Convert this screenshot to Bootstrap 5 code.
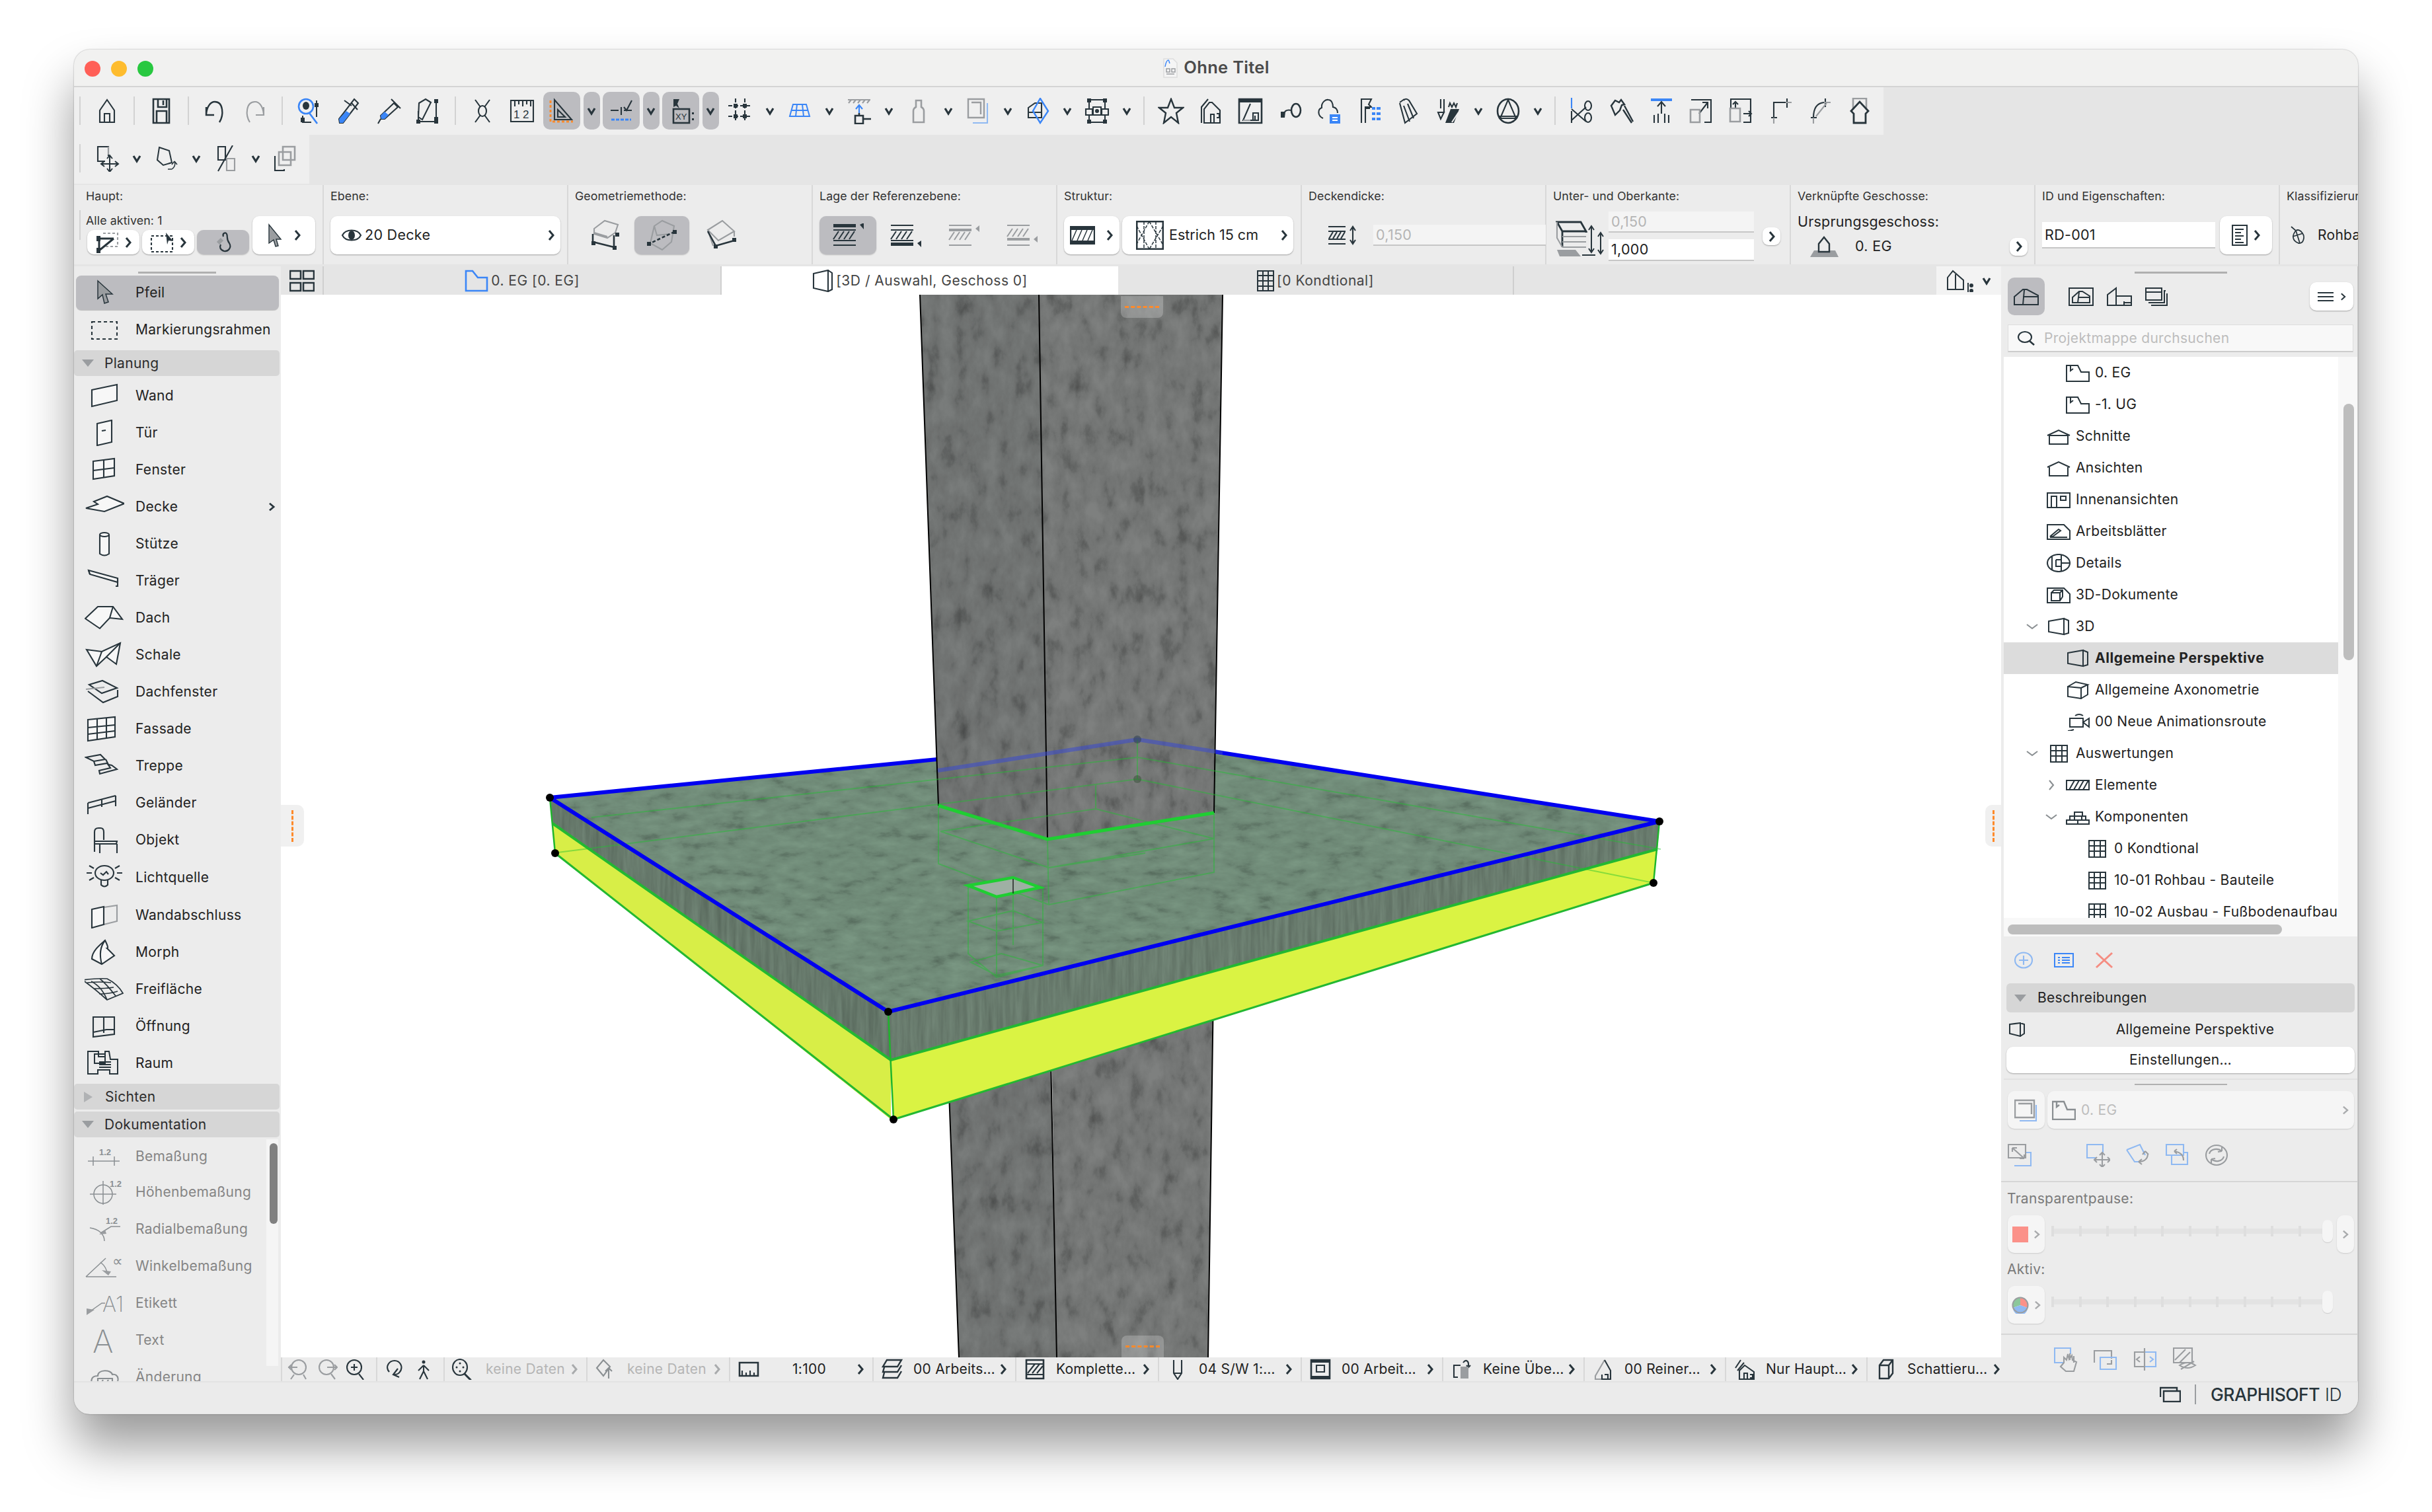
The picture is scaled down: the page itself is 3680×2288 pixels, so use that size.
<!DOCTYPE html>
<html lang="de">
<head>
<meta charset="UTF-8">
<title>Ohne Titel</title>
<link href="https://cdn.jsdelivr.net/npm/bootstrap@5.3.3/dist/css/bootstrap.min.css" rel="stylesheet">
<style>
html,body{background:#fff;margin:0}
body{padding:75px 0 0 112px;width:3680px;height:2288px;overflow:hidden;font-family:Inter,"Liberation Sans",sans-serif;color:#222;font-size:21px;letter-spacing:.3px;line-height:1.2}
.app-win{width:3456px;height:2065px;border-radius:24px;overflow:hidden;background:#e5e5e5;box-shadow:0 48px 75px rgba(0,0,0,.4),0 0 2px rgba(0,0,0,.4)}
.ic{fill:none;stroke:#28353c;stroke-width:2.1;flex:none;display:block}
.bl{stroke:#3b86f7}.gr{stroke:#9a9da0}.lb{stroke:#8fb9f2}.or{stroke:#ff8a2a}
.fd{fill:#28353c;stroke:none}.fb{fill:#3b86f7;stroke:none}.fg{fill:#9a9da0;stroke:none}.fw{fill:#f7f7f7}
.thin{stroke-width:1.5}
.off .ic{stroke:#8a8f92}.off .ic .fg{stroke:none}
.i40{width:40px;height:40px}
.pal-ic{width:60px;height:40px}
svg text{stroke:none;fill:currentColor;letter-spacing:0}
/* title */
.title-strip{height:57px;background:#f1f1f0;border-bottom:2px solid #d4d4d4;position:relative}
.light-dots{position:absolute;left:16px;top:17px;gap:16px}
.light-dots span{width:24px;height:24px}
.ttl{font-size:25.5px;font-weight:600;color:#4b4b4b}
/* toolbars */
.bar-1{height:72px;width:2738px;background:#efefef}
.bar-wrap{height:146px}
.bar-2{height:74px;width:356px;background:#efefef}
.t-sep{width:22px;height:72px;flex:none;position:relative}
.t-sep::after{content:"";position:absolute;left:10px;top:14px;height:43px;width:2px;background:#d2d2d2}
.t-sep.first{margin-left:-2px}
.t-ic{width:60px;height:72px;flex:none;display:flex;align-items:center;justify-content:center;position:relative}
.t-ch{width:30px;height:72px;flex:none;display:flex;align-items:center;justify-content:center}
.t-ic.on::before{content:"";position:absolute;left:2px;right:2px;top:7px;bottom:8px;background:#bcbcc0;border-radius:10px}
.t-ch.on{position:relative}
.t-ch.on::before{content:"";position:absolute;left:3px;right:2px;top:7px;bottom:8px;background:#bcbcc0;border-radius:10px}
.t-ic .ic,.t-ch .ic{position:relative}
.chv{width:14px;height:14px;stroke-width:3.2;fill:none;stroke:#28353c;display:block;flex:none}
.chr{width:12px;height:18px;stroke-width:3;fill:none;stroke:#28353c;display:block;flex:none}
.chr.dim{stroke:#a9abad}
/* info box */
.info-strip{height:120px;margin:2px 0 3px;background:#ececec;overflow:hidden}
.i-grp{width:370px;flex:none;height:120px;border-right:2px solid #d8d8d8;padding:8px 0 0 10px}
.i-grp.first{width:378px;padding-left:18px}
.i-grp.last{width:118px;border:0;overflow:hidden;white-space:nowrap}
.i-lab{font-size:17.8px;letter-spacing:.1px;height:18px;line-height:18px;color:#333;white-space:nowrap}
.i-body{margin-top:21px;height:58px}
.w-btn{background:#fff;border-radius:10px;box-shadow:0 1px 2px rgba(0,0,0,.32);height:58px;flex:none}
.g-btn{background:#bcbcc0;border-radius:10px;box-shadow:0 1px 2px rgba(0,0,0,.2);flex:none}
.m-btn{width:79px;height:37px}
.sm-btn{width:27px;height:27px;border-radius:9px;background:#fff;box-shadow:0 1px 2px rgba(0,0,0,.3);flex:none}
.f-in{background:#fff;border-bottom:2px solid #c6c6c6;padding-left:4px;font-size:21.5px;flex:none}
.f-in.dis{background:#f4f4f4;color:#b5b5b5}
/* palette */
.work-row{height:1687px}
.pal{width:313px;flex:none;background:#ececec;overflow:hidden;position:relative}
.grip{height:14px;position:relative}
.grip::after{content:"";position:absolute;top:8px;left:97px;width:118px;height:3px;background:#b0b0b0}
.pal-r{height:56px;padding-left:16px;position:relative}
.pal-r .pal-ic{margin-right:17px;flex:none}
.pal-r.sel{height:52px;margin:0 3px 2px;padding-left:13px;background:#bcbcc0;border-radius:8px;box-shadow:0 1px 1px rgba(0,0,0,.2)}
.pal-h{height:39px;background:#d6d6d6;border-radius:5px;margin:0 2px 0 0;padding-left:12px;color:#2c2c2c}
.tri-d{width:0;height:0;border:9px solid transparent;border-top:11px solid #9a9da0;border-bottom:0;margin-right:16px}
.tri-r{width:0;height:0;border:8px solid transparent;border-left:13px solid #b0b2b4;border-right:0;margin:0 19px 0 3px}
.off-list{height:366px;overflow:hidden;position:relative;color:#858585}
.pal-track{position:absolute;right:4px;top:0;bottom:23px;width:18px;background:#f5f5f5}
.pal-thumb{position:absolute;left:5px;top:6px;width:12px;height:122px;background:#808080;border-radius:6px}
/* centre */
.centre{width:2603px;flex:none}
.tab-strip{height:43px;background:#e5e5e5}
.tab-itm{width:600px;flex:none;font-size:21px;letter-spacing:.5px;color:#444;border-right:2px solid #cfcfcf;gap:4px}
.tab-itm.act{background:#fff;border-right:0}
.tab-grid{width:65px;flex:none;border-right:2px solid #cfcfcf}
.tab-rest{width:98px;background:#f3f3f3;flex:none}
.cv-wrap{height:1608px;background:#fff;position:relative;overflow:hidden}
.cv-wrap>svg{display:block}
.h-grab{position:absolute;background:#f0f0f0;display:flex;align-items:center;justify-content:center}
.h-l{left:0;top:772px;width:35px;height:63px;border-radius:0 10px 10px 0}
.h-r{right:0;top:772px;width:24px;height:63px;border-radius:10px 0 0 10px}
.h-t{left:1271px;top:2px;width:64px;height:33px;border-radius:0 0 8px 8px;background:rgba(255,255,255,.22)}
.h-b{left:1272px;bottom:0;width:64px;height:33px;border-radius:8px 8px 0 0;background:rgba(255,255,255,.22)}
.dash-v{width:0;height:48px;border-left:3px dashed #ff8a2a}
.dash-h{height:0;width:52px;border-top:3px dashed #ff8a2a}
.stat-strip{height:36px;background:#ececec;overflow:hidden;font-size:21px;letter-spacing:.25px;white-space:nowrap;border-left:2px solid #d8d8d8}
.st-g{height:36px;flex:none;border-right:2px solid #d8d8d8;padding:0 12px 0 12px}
.st-g .ic{width:32px;height:32px;margin-right:4px}
.st-g .st-t{flex:1 1 auto;padding-left:12px}
.w216{width:216px}.w214{width:214px}.w144{width:144px}.w102{width:102px}.w205{width:205px;border-right:0}
.dimt{color:#b5b5b5}
/* right */
.side{width:540px;flex:none;background:#ececec;overflow:hidden;border-right:1px solid #ccc}
.side-top{height:57px;padding-left:10px}
.side-grip{height:17px;position:relative}
.side-grip::after{content:"";position:absolute;top:8px;left:202px;width:140px;height:3px;background:#b0b0b0}
.s-sel{width:56px;height:57px;background:#bcbcc0;border-radius:10px;margin-right:36px}
.s-ic{margin-right:20px}
.s-menu{width:66px;height:43px;background:#fff;border-radius:10px;box-shadow:0 1px 2px rgba(0,0,0,.3);margin:0 6px 0 auto;gap:10px}
.s-find{height:42px;margin:14px 6px 7px 10px;background:#f8f8f8;border:1px solid #ddd;border-bottom:2px solid #ccc;color:#bdbdbd;padding-left:14px;gap:14px}
.t-list{height:849px;width:506px;background:#fff;overflow:hidden;margin-left:4px}
.t-r{height:48px;white-space:nowrap;overflow:hidden}
.t-r.sel{background:#dcdcdc;font-weight:700;letter-spacing:.6px}
.lv0{padding-left:31px}.lv1{padding-left:60px}.lv2{padding-left:89px}
.t-cw{width:24px;flex:none;margin-right:10px;display:flex;justify-content:center}
.t-i{width:36px;height:28px;flex:none;margin-right:8px}
.t-track{width:30px;height:877px;background:#f8f8f8;padding:71px 0 0 8px;flex:none}
.t-thumb{width:16px;height:388px;background:#bdbdbd;border-radius:8px}
.t-hbar{height:28px;width:506px;background:#f8f8f8;margin-left:4px;padding:10px 0 0 6px}
.t-hthumb{width:415px;height:15px;background:#bdbdbd;border-radius:8px}
.s-acts{height:71px;padding-left:20px;gap:32px}
.s-h{height:44px;background:#d6d6d6;border-radius:6px;margin:0 4px 0 8px;padding-left:12px}
.s-h .tri-d{border-width:11px 9px 0;margin-right:17px}
.s-pers{height:52px;padding-left:12px}
.s-pers span{flex:1;text-align:center;padding-left:12px}
.s-btn{height:40px;margin:0 4px 0 8px;background:#fff;border-radius:10px;box-shadow:0 1px 2px rgba(0,0,0,.3);text-align:center;line-height:40px}
.s-sep{height:27px;position:relative}
.s-sep::before{content:"";position:absolute;left:4px;right:0;top:8px;height:2px;background:#e2e2e2}
.s-sep::after{content:"";position:absolute;left:202px;width:140px;top:16px;height:2px;background:#b0b0b0}
.o-btn{height:57px;background:#f5f5f5;border-radius:10px;box-shadow:0 1px 2px rgba(0,0,0,.14);flex:none}
.o-line{height:2px;background:#d6d6d6}
.s-note{color:#7a7a7a;margin-left:9px;height:24px;line-height:24px}
.s-rowline{margin:13px 0 0 10px;height:57px}
.sld{width:424px;margin:7px 10px 0 8px;position:relative;height:34px;flex:none;padding:0 44px 0 2px}
.sld::before{content:"";position:absolute;left:2px;right:0;top:13px;height:8px;background:#e3e3e3}
.sld span{width:4px;height:16px;background:#dedede;position:relative}
.sld::after{content:"";position:absolute;right:-4px;top:0;width:16px;height:34px;background:#f5f5f5;border-radius:8px;box-shadow:0 1px 1px rgba(0,0,0,.14)}
.foot-strip{height:49px;background:#ebebeb;padding:0 25px 12px 0;border-top:2px solid #e3e3e3}
.gs-logo{font-size:26.5px;font-weight:500;letter-spacing:-.5px;color:#27343b;border-left:2px solid #9a9da0;padding-left:22px;margin-left:21px;height:30px;line-height:30px}
.gs-logo span{font-weight:300;margin-left:8px}
</style>
</head>
<body>
<div class="app-win d-flex flex-column">
  <div class="title-strip d-flex align-items-center justify-content-center flex-none">
    <div class="light-dots d-flex"><span class="rounded-circle" style="background:#ff5f57"></span><span class="rounded-circle" style="background:#febc2e"></span><span class="rounded-circle" style="background:#28c840"></span></div>
    <svg class="ic me-2 thin" width="24" height="30" viewBox="0 0 24 30"><path class="gr" d="M2 1h14l6 6v22H2Z" fill="#f5f5f5" style="stroke:#ddd"/><path class="bl thin" d="M4 13c1-6 3-10 5-10 1 0 1 3 2 5"/><path class="gr thin" d="M6 16h5v5H6ZM14 16h5v5h-5ZM6 24h12"/></svg>
    <span class="ttl">Ohne Titel</span>
  </div>

  <div class="bar-wrap">
    <div class="bar-1 d-flex">
      <div class="t-sep first"></div>
      <div class="t-ic"><svg class="ic i40" viewBox="0 0 40 40"><path d="M20 3 9 19v18h22V19ZM16 37V24h8v13"/></svg></div>
      <div class="t-sep"></div>
      <div class="t-ic"><svg class="ic i40" viewBox="0 0 40 40"><path d="M8 2h24v36H8ZM15 2v12h13V2M23 4v7M13 37V20h15v17" stroke-width="2.6"/></svg></div>
      <div class="t-sep"></div>
      <div class="t-ic"><svg class="ic i40" viewBox="0 0 40 40"><path d="M26 37c7-11 6-31-7-31C12 6 7 14 6 25M6 14v12h12" stroke-width="2.4"/></svg></div>
      <div class="t-ic"><svg class="ic i40" viewBox="0 0 40 40"><path class="gr" d="M12 37C5 26 6 6 20 6c7 0 12 8 13 19M33 14v12H21"/></svg></div>
      <div class="t-sep"></div>
      <div class="t-ic"><svg class="ic i40" viewBox="0 0 40 40"><circle class="bl" cx="15" cy="13" r="11" stroke-width="2.6"/><ellipse class="fd" cx="15" cy="12" rx="5" ry="6"/><path class="bl" d="M20 23l12 16" stroke-width="2.6"/><path d="M31 4v25M10 38V27M10 37h13" stroke-width="2"/><rect class="fd" x="28" y="8" width="6" height="6"/><rect class="fd" x="7" y="30" width="6" height="7"/></svg></div>
      <div class="t-ic"><svg class="ic i40" viewBox="0 0 40 40"><path d="M28 2 34 8 11 38 6 38 5 32ZM24 12l-11-8M33 18 24 8"/><path class="fb" d="M16 20 22 24 11 38 6 38 5 32Z"/></svg></div>
      <div class="t-ic"><svg class="ic i40" viewBox="0 0 40 40"><path d="M28 8 34 14 14 32 9 32 8 27ZM24 2l14 14M8 32l-4 7"/><path class="fb" d="M14 21 20 26 14 32 9 32 8 27Z"/></svg></div>
      <div class="t-ic"><svg class="ic i40" viewBox="0 0 40 40"><path d="M6 8l10-6 8 5-13 26-6-4ZM32 3v33M5 36h28M5 20v16"/><rect class="fd" x="29" y="2" width="6" height="6"/><rect class="fd" x="29" y="29" width="6" height="6"/><rect class="fd" x="2" y="33" width="6" height="6"/><rect class="fd" x="29" y="33" width="6" height="6"/></svg></div>
      <div class="t-sep"></div>
      <div class="t-ic"><svg class="ic i40" viewBox="0 0 40 40"><path d="M9 3l8 11M31 3l-8 11M9 37l8-11M31 37l-8-11"/><ellipse cx="20" cy="20" rx="6" ry="8"/></svg></div>
      <div class="t-ic"><svg class="ic i40" viewBox="0 0 40 40"><path d="M3 4h34v32H3ZM9 4v9M15 4v6M21 4v9M27 4v6M33 4v9"/><text x="7" y="31" font-size="17" font-family="Liberation Sans" style="fill:#28353c">1</text><text x="21" y="31" font-size="17" font-family="Liberation Sans" style="fill:#28353c">2</text></svg></div>
      <div class="t-ic on"><svg class="ic i40" viewBox="0 0 40 40"><path d="M9 3v30h26ZM14 18v11h11Z"/><path class="or" d="M3 4v32h34" stroke-dasharray="4 3" stroke-width="3"/></svg></div>
      <div class="t-ch on"><svg class="chv" style="position:relative" viewBox="0 0 14 14"><path d="M2 3l5 8 5-8"/></svg></div>
      <div class="t-ic on"><svg class="ic i40" viewBox="0 0 40 40"><path d="M4 19h12M24 19h12M20 14v12M24 14l4 5 8-15"/><path class="bl" d="M5 33h30" stroke-width="3" stroke-dasharray="5 2"/></svg></div>
      <div class="t-ch on"><svg class="chv" style="position:relative" viewBox="0 0 14 14"><path d="M2 3l5 8 5-8"/></svg></div>
      <div class="t-ic on"><svg class="ic i40" viewBox="0 0 40 40"><path class="fd" d="M9 2h9l-3 7 3 7-5-4-4 2Z"/><rect x="9" y="17" width="24" height="21" stroke-width="2.6"/><text x="12" y="33" font-size="13" font-family="Liberation Sans" style="fill:#28353c">XY</text><rect class="fd" x="37" y="22" width="3" height="3"/><rect class="fd" x="37" y="31" width="3" height="3"/></svg></div>
      <div class="t-ch on"><svg class="chv" style="position:relative" viewBox="0 0 14 14"><path d="M2 3l5 8 5-8"/></svg></div>
      <div class="t-ic"><svg class="ic i40" viewBox="0 0 40 40"><path d="M13 1v36M27 1v36M2 12h36M2 28h36" stroke-dasharray="6 3"/><rect class="fd" x="10" y="9" width="6" height="6"/><rect class="fd" x="24" y="9" width="6" height="6"/><rect class="fd" x="10" y="25" width="6" height="6"/><rect class="fd" x="24" y="25" width="6" height="6"/></svg></div>
      <div class="t-ch"><svg class="chv" viewBox="0 0 14 14"><path d="M2 3l5 8 5-8"/></svg></div>
      <div class="t-ic"><svg class="ic i40" viewBox="0 0 40 40"><path class="bl" d="M10 10h20l5 18H5ZM16 10l-2 18M24 10l2 18M7 19h26" stroke-width="2"/></svg></div>
      <div class="t-ch"><svg class="chv" viewBox="0 0 14 14"><path d="M2 3l5 8 5-8"/></svg></div>
      <div class="t-ic"><svg class="ic i40" viewBox="0 0 40 40"><path class="gr" d="M3 3h34M8 3 4 8M15 3l-4 5M22 3l-4 5M29 3l-4 5M36 3l-4 5"/><path class="bl" d="M20 13v10M15 17l5-6 5 6"/><path d="M20 27v-4M14 27h12v12H14ZM26 32h12" stroke-width="2.6"/></svg></div>
      <div class="t-ch"><svg class="chv" viewBox="0 0 14 14"><path d="M2 3l5 8 5-8"/></svg></div>
      <div class="t-ic"><svg class="ic i40" viewBox="0 0 40 40"><path class="gr" d="M16 4h8v10q4 2 4 6v17H12V20q0-4 4-6Z" stroke-width="2.6"/></svg></div>
      <div class="t-ch"><svg class="chv" viewBox="0 0 14 14"><path d="M2 3l5 8 5-8"/></svg></div>
      <div class="t-ic"><svg class="ic i40" viewBox="0 0 40 40"><path class="lb" d="M34 8v30H12"/><path class="gr" d="M5 2h24v28H5ZM10 7h14v18" stroke-width="2.4"/></svg></div>
      <div class="t-ch"><svg class="chv" viewBox="0 0 14 14"><path d="M2 3l5 8 5-8"/></svg></div>
      <div class="t-ic"><svg class="ic i40" viewBox="0 0 40 40"><path d="M6 15 16 8h10v22H6ZM6 22h20"/><path class="bl" d="M24 1 36 20 24 38 13 20Z" stroke-width="2.4"/></svg></div>
      <div class="t-ch"><svg class="chv" viewBox="0 0 14 14"><path d="M2 3l5 8 5-8"/></svg></div>
      <div class="t-ic"><svg class="ic i40" viewBox="0 0 40 40"><path d="M8 3h24M32 3v14M8 3v14M3 17h10v9H3ZM27 17h10v9H27ZM8 26v11M32 26v11M8 37h24M14 14h12v12H14Z"/><rect class="fd" x="5" y="1" width="6" height="6"/><rect class="fd" x="29" y="1" width="6" height="6"/><rect class="fd" x="5" y="33" width="6" height="6"/><rect class="fd" x="29" y="33" width="6" height="6"/><circle class="fd" cx="20" cy="20" r="3"/></svg></div>
      <div class="t-ch"><svg class="chv" viewBox="0 0 14 14"><path d="M2 3l5 8 5-8"/></svg></div>
      <div class="t-sep"></div>
      <div class="t-ic"><svg class="ic i40" viewBox="0 0 40 40"><path d="M20 2l5 13h13l-10 8 3 15-11-9-11 9 3-15L2 15h13Z" stroke-width="2.4"/></svg></div>
      <div class="t-ic"><svg class="ic i40" viewBox="0 0 40 40"><path d="M6 38V14L16 2M10 38V17L18 7h4l12 12v19H10ZM20 38V25h5v13M29 24h4v6h-4"/></svg></div>
      <div class="t-ic"><svg class="ic i40" viewBox="0 0 40 40"><path d="M3 2h34v36H3Z" stroke-width="2.6"/><path class="fd" d="M3 2h34v5H3Z"/><path d="M20 9 9 34h20"/><path class="gr" d="M9 34h11"/><path d="M24 23h8v11h-8ZM27 27v7"/></svg></div>
      <div class="t-ic"><svg class="ic i40" viewBox="0 0 40 40"><ellipse cx="29" cy="19" rx="7" ry="10" stroke-width="2.6"/><path d="M22 19c-8-2-11 2-12 7"/><path class="fd" d="M6 21h7l-1 9H6Z"/></svg></div>
      <div class="t-ic"><svg class="ic i40" viewBox="0 0 40 40"><path d="M10 31C1 27 2 17 8 15 7 7 14 2 18 3c5 0 7 6 7 11 6 1 7 6 7 9"/><path class="fb" d="M20 25h16v14H20Z"/><path d="M24 30h8M24 34h8" style="stroke:#fff"/></svg></div>
      <div class="t-ic"><svg class="ic i40" viewBox="0 0 40 40"><path d="M8 38V2h15l-4 8 4 4h-9v24M14 16h7"/><path class="fb" d="M24 14h5v4h-5ZM31 14h6v4h-6ZM24 22h5v4h-5ZM31 22h6v4h-6ZM24 30h5v4h-5ZM31 30h6v4h-6Z"/></svg></div>
      <div class="t-ic"><svg class="ic i40" viewBox="0 0 40 40"><path d="M6 7 13 2M6 8l8 30L32 24 20 4c-3-3-6-3-8 0M12 12l9 24M18 9l9 22"/></svg></div>
      <div class="t-ic"><svg class="ic i40" viewBox="0 0 40 40"><path d="M8 2v14M8 22h-4l4 10 5-10ZM13 2v20M20 14l2-6 3 6 3-6 3 6 2-6"/><path class="fd" d="M15 38l8-21h13l-8 21Z"/><path d="M25 37l10-15" style="stroke:#efefef"/></svg></div>
      <div class="t-ch"><svg class="chv" viewBox="0 0 14 14"><path d="M2 3l5 8 5-8"/></svg></div>
      <div class="t-ic"><svg class="ic i40" viewBox="0 0 40 40"><ellipse cx="20" cy="20" rx="16" ry="18" stroke-width="2.6"/><path d="M20 3 8 31h24ZM6 28h28"/></svg></div>
      <div class="t-ch"><svg class="chv" viewBox="0 0 14 14"><path d="M2 3l5 8 5-8"/></svg></div>
      <div class="t-sep"></div>
      <div class="t-ic"><svg class="ic i40" viewBox="0 0 40 40"><path class="bl" d="M4 0v16"/><path d="M4 20v18M4 17l22 19M4 34 26 14"/><ellipse cx="29" cy="12" rx="5" ry="7"/><ellipse cx="29" cy="30" rx="5" ry="7"/></svg></div>
      <div class="t-ic"><svg class="ic i40" viewBox="0 0 40 40"><path d="M10 4 4 12l6 14 7-7 3-8 4-1-5-7-3 4ZM22 18l13 20M24 12l13 24" stroke-width="2.4"/></svg></div>
      <div class="t-ic"><svg class="ic i40" viewBox="0 0 40 40"><path class="bl" d="M4 3h32" stroke-width="4"/><path d="M20 6v18M14 13l6-7 6 7M9 26v12M15 24v14M25 24v14M31 26v12"/></svg></div>
      <div class="t-ic"><svg class="ic i40" viewBox="0 0 40 40"><path d="M5 3h30v34h-10M35 3M17 24 30 7M22 7h8v9"/><path class="gr" d="M4 18h14v19H4Z" stroke-width="2.6"/></svg></div>
      <div class="t-ic"><svg class="ic i40" viewBox="0 0 40 40"><path d="M5 16V2h30v35H24M12 16V8M8 10l4-4 4 4M24 24h12M32 20l4 4-4 4"/><path class="gr" d="M4 16h15v20H4Z" stroke-width="2.6"/></svg></div>
      <div class="t-ic"><svg class="ic i40" viewBox="0 0 40 40"><path d="M10 30V7h18M30 1v14M6 30h9"/><path class="gr" d="M10 30v9M28 7h9"/></svg></div>
      <div class="t-ic"><svg class="ic i40" viewBox="0 0 40 40"><path d="M10 30C10 17 15 8 26 7M28 1v13M6 30h9"/><path class="gr" d="M10 30v9M26 7h10M14 28 30 8"/></svg></div>
      <div class="t-ic"><svg class="ic i40" viewBox="0 0 40 40"><path class="gr" d="M10 18V1h20v17" stroke-width="2.6"/><path d="M7 20 20 6l13 14-3 3-1 1v14H11V24l-4-4Z" stroke-width="2.8"/></svg></div>
    </div>
    <div class="bar-2 d-flex">
      <div class="t-sep first"></div>
      <div class="t-ic"><svg class="ic i40" viewBox="0 0 40 40"><path d="M17 24H6V2h16v14M6 2"/><path class="gr" d="M22 14v-12"/><path d="M24 16v23M12 28h24M20 20l4-5 4 5M20 35l4 5 4-5M16 24l-5 4 5 4M32 24l5 4-5 4" stroke-width="2"/></svg></div>
      <div class="t-ch"><svg class="chv" viewBox="0 0 14 14"><path d="M2 3l5 8 5-8"/></svg></div>
      <div class="t-ic"><svg class="ic i40" viewBox="0 0 40 40"><path d="M9 3l15 5 4 18-13 4L6 22Z" stroke-width="2"/><path class="thin" d="M32 24c2 6-1 10-4 12M28 36h-6M32 24l-4 5M32 24l4 5"/></svg></div>
      <div class="t-ch"><svg class="chv" viewBox="0 0 14 14"><path d="M2 3l5 8 5-8"/></svg></div>
      <div class="t-ic"><svg class="ic i40" viewBox="0 0 40 40"><path d="M8 2h11v20H8ZM8 39 30 0"/><path class="gr" d="M21 20h12v18H21Z"/></svg></div>
      <div class="t-ch"><svg class="chv" viewBox="0 0 14 14"><path d="M2 3l5 8 5-8"/></svg></div>
      <div class="t-ic"><svg class="ic i40" viewBox="0 0 40 40"><path d="M4 16v22h14v-2"/><path class="gr" d="M16 2h18v20H16ZM10 10h18v20H10Z" stroke-width="2.6"/></svg></div>
    </div>
  </div>

  <div class="info-strip d-flex">
    <div class="i-grp first position-relative">
      <div class="i-lab">Haupt:</div>
      <div class="d-flex" style="margin-top:18px;height:62px">
        <div class="d-flex flex-column">
          <div class="i-lab" style="height:19px;line-height:19px">Alle aktiven: 1</div>
          <div class="d-flex gap-1 ms-0" style="margin-top:5px">
            <div class="w-btn m-btn d-flex align-items-center justify-content-center gap-2" style="margin-left:2px"><svg class="ic" width="36" height="32" viewBox="0 0 36 32"><path class="gr" d="M12 2h22v20H12" stroke-dasharray="4 3"/><path d="M2 10h26M6 10v20M6 28 28 10" stroke-width="3"/><rect class="fd" x="2" y="6" width="6" height="8"/><rect class="fd" x="2" y="24" width="6" height="8"/></svg><svg class="chr" viewBox="0 0 12 18"><path d="M3 2l6 7-6 7"/></svg></div>
            <div class="w-btn m-btn d-flex align-items-center justify-content-center gap-2"><svg class="ic" width="36" height="32" viewBox="0 0 36 32"><path d="M2 6h32v24H2Z" stroke-dasharray="4 3"/><path class="fd" d="M24 1l11 13-7-1-2 6Z"/></svg><svg class="chr" viewBox="0 0 12 18"><path d="M3 2l6 7-6 7"/></svg></div>
            <div class="g-btn m-btn d-flex align-items-center justify-content-center"><svg class="ic" width="34" height="34" viewBox="0 0 34 34"><path class="gr" d="M9 18l6-6" stroke-width="6"/><path d="M17 8c-2-5 3-7 5-4 2 4-1 8 4 14 4 7-2 13-8 12-6-2-7-6-5-10" stroke-width="2.2"/></svg></div>
          </div>
        </div>
        <div class="w-btn d-flex align-items-center justify-content-center gap-3" style="width:95px;margin-left:5px;margin-top:3px"><svg class="ic" width="24" height="36" viewBox="0 0 24 36"><path class="fg" d="M3 2 21 24h-7l3 10-4 1-3-10-7 5Z"/><path d="M3 2 21 24h-7l3 10-4 1-3-10-7 5Z" stroke-width="1.4"/></svg><svg class="chr" viewBox="0 0 12 18"><path d="M3 2l6 7-6 7"/></svg></div>
      </div>
      <span class="position-absolute" style="left:8px;top:38px;width:2px;height:45px;background:#d2d2d2"></span>
    </div>
    <div class="i-grp">
      <div class="i-lab">Ebene:</div>
      <div class="i-body"><div class="w-btn d-flex align-items-center ps-3 pe-2" style="width:348px"><svg class="ic me-1" width="32" height="28" viewBox="0 0 32 28"><path d="M2 14C7 4 25 4 30 14 25 24 7 24 2 14Z"/><ellipse class="fd" cx="16" cy="14" rx="5" ry="7"/></svg><span class="flex-grow-1" style="font-size:21.5px">20 Decke</span><svg class="chr" viewBox="0 0 12 18"><path d="M3 2l6 7-6 7"/></svg></div></div>
    </div>
    <div class="i-grp">
      <div class="i-lab">Geometriemethode:</div>
      <div class="i-body d-flex align-items-center">
        <div style="width:90px" class="d-flex justify-content-center"><svg class="ic" width="52" height="48" viewBox="0 0 52 48"><path class="gr" d="M10 14 26 2 46 8l-4 12-12 8-20-6ZM10 20l20 6"/><path d="M8 34l32 8M8 22v16M40 24v18" stroke-width="2.6"/><rect class="fd" x="6" y="33" width="6" height="6"/><rect class="fd" x="38" y="40" width="6" height="6"/><rect class="fd" x="42" y="20" width="6" height="6"/></svg></div>
        <div class="g-btn d-flex align-items-center justify-content-center" style="width:83px;height:58px"><svg class="ic" width="52" height="48" viewBox="0 0 52 48"><path class="gr" d="M14 10 26 2 44 10 40 34 26 46 8 36ZM14 10l4 14 20-2"/><path d="M4 38 46 18" stroke-dasharray="5 3" stroke-width="2.6"/><rect class="fd" x="3" y="34" width="6" height="6"/><rect class="fd" x="42" y="16" width="6" height="6"/></svg></div>
        <div style="width:92px" class="d-flex justify-content-center"><svg class="ic" width="52" height="48" viewBox="0 0 52 48"><path class="gr" d="M8 16 30 2 48 18 24 32ZM8 16l8 24M48 18v8"/><path d="M8 18l12 22 28-8" stroke-width="2.6"/><rect class="fd" x="17" y="38" width="6" height="6"/><rect class="fd" x="45" y="28" width="6" height="6"/></svg></div>
      </div>
    </div>
    <div class="i-grp">
      <div class="i-lab">Lage der Referenzebene:</div>
      <div class="i-body d-flex align-items-center">
        <div class="g-btn d-flex align-items-center justify-content-center" style="width:86px;height:58px"><svg class="ic" width="52" height="36" viewBox="0 0 52 36"><path class="fd" d="M4 1h34v5H4Z"/><path d="M4 10h34M4 26h34M4 33h34M4 24l8-12M12 24l8-12M20 24l8-12M28 24l8-12" stroke-width="2"/><path class="fd" d="M44 2l6-3v10Z"/></svg></div>
        <div style="width:88px" class="d-flex justify-content-center"><svg class="ic" width="52" height="36" viewBox="0 0 52 36"><path d="M4 3h34M4 26h34M4 10h34M4 24l8-12M12 24l8-12M20 24l8-12M28 24l8-12" stroke-width="2"/><path class="fd" d="M4 29h34v5H4Z"/><path class="fd" d="M44 30l6-4v10Z"/></svg></div>
        <div style="width:88px" class="d-flex justify-content-center"><svg class="ic" width="52" height="36" viewBox="0 0 52 36"><path class="gr" d="M4 3h34M4 33h34M4 25l8-12M12 25l8-12M20 25l8-12M28 25l8-12" stroke-width="2"/><path class="fg" d="M4 8h34v4H4Z"/><path class="fg" d="M44 8l6-5v10Z"/></svg></div>
        <div style="width:88px" class="d-flex justify-content-center"><svg class="ic" width="52" height="36" viewBox="0 0 52 36"><path class="gr" d="M4 3h34M4 33h34M4 20l8-12M12 20l8-12M20 20l8-12M28 20l8-12" stroke-width="2"/><path class="fg" d="M4 22h34v4H4Z"/><path class="fg" d="M44 24l6-5v10Z"/></svg></div>
      </div>
    </div>
    <div class="i-grp">
      <div class="i-lab">Struktur:</div>
      <div class="i-body d-flex gap-1">
        <div class="w-btn d-flex align-items-center justify-content-center gap-3" style="width:84px"><svg class="ic" width="38" height="28" viewBox="0 0 38 28"><path d="M1 1h36v26H1Z" stroke-width="2.4"/><path class="fd" d="M1 1h36v5H1ZM1 22h36v5H1Z"/><path class="thin" d="M3 22 10 6M11 22 18 6M19 22 26 6M27 22 34 6"/></svg><svg class="chr" viewBox="0 0 12 18"><path d="M3 2l6 7-6 7"/></svg></div>
        <div class="w-btn d-flex align-items-center" style="width:259px;padding-left:21px"><svg class="ic me-2" width="42" height="44" viewBox="0 0 42 44"><rect x="1" y="1" width="40" height="42" stroke-width="3"/><path class="thin" d="M1 8 20 43M20 1l20 34M41 8 20 43M20 1 1 35M12 1v42M30 1v42" stroke-dasharray="5 2"/></svg><span class="flex-grow-1" style="font-size:21.5px;letter-spacing:0;white-space:nowrap">Estrich 15 cm</span><svg class="chr me-2" viewBox="0 0 12 18"><path d="M3 2l6 7-6 7"/></svg></div>
      </div>
    </div>
    <div class="i-grp">
      <div class="i-lab">Deckendicke:</div>
      <div class="i-body d-flex align-items-center" style="padding-left:29px">
        <svg class="ic" width="46" height="30" viewBox="0 0 46 30"><path d="M1 2h26M1 28h26M1 9h26M1 21h26M2 20 8 10M8 20l6-10M14 20l6-10M20 20l6-10"/><path d="M38 3v24M34 8l4-6 4 6M34 22l4 6 4-6"/></svg>
        <div class="f-in dis" style="width:261px;height:32px;line-height:30px;margin-left:23px">0,150</div>
      </div>
    </div>
    <div class="i-grp">
      <div class="i-lab">Unter- und Oberkante:</div>
      <div class="d-flex align-items-center" style="margin-top:14px;height:75px;padding-left:4px">
        <svg class="ic" width="84" height="60" viewBox="0 0 84 60"><path d="M2 8h36l8 14H10ZM10 22v24M46 22v2" stroke-width="2.8"/><path class="gr" d="M2 8v24l8 14M10 30h36M10 38h36M10 46h36"/><path class="fg" d="M2 50h28l8 10H6Z"/><path d="M54 14v40M50 20l4-6 4 6M50 48l4 6 4-6M68 24v32M64 30l4-6 4 6M64 50l4 6 4-6M40 58h20" stroke-width="2"/></svg>
        <div class="d-flex flex-column" style="gap:10px;margin-left:-4px"><div class="f-in dis" style="width:220px;height:32px;line-height:30px">0,150</div><div class="f-in" style="width:220px;height:33px;line-height:31px">1,000</div></div>
        <div class="sm-btn d-flex align-items-center justify-content-center" style="margin-left:13px"><svg class="chr" viewBox="0 0 12 18"><path d="M3 2l6 7-6 7"/></svg></div>
      </div>
    </div>
    <div class="i-grp">
      <div class="i-lab">Verknüpfte Geschosse:</div>
      <div style="margin-top:18px;font-size:21.5px;line-height:22px;letter-spacing:.2px">Ursprungsgeschoss:</div>
      <div class="d-flex align-items-center" style="margin-top:12px;height:30px">
        <svg class="ic" style="margin-left:17px" width="46" height="32" viewBox="0 0 46 32"><path class="fg" d="M8 22h32l5 10H2Z"/><path d="M23 2 15 12v12h16V12Z" stroke-width="2.4" fill="#ececec"/></svg>
        <span class="flex-grow-1" style="margin-left:24px;font-size:21.5px">0. EG</span>
        <div class="sm-btn d-flex align-items-center justify-content-center" style="margin-right:10px"><svg class="chr" viewBox="0 0 12 18"><path d="M3 2l6 7-6 7"/></svg></div>
      </div>
    </div>
    <div class="i-grp">
      <div class="i-lab">ID und Eigenschaften:</div>
      <div class="i-body d-flex align-items-center">
        <div class="f-in" style="width:262px;height:40px;line-height:38px">RD-001</div>
        <div class="w-btn d-flex align-items-center justify-content-center gap-2" style="width:79px;margin-left:7px"><svg class="ic" width="24" height="32" viewBox="0 0 24 32"><path d="M1 1h22v30H1Z"/><path d="M5 7h13M5 12h9M5 17h13M5 22h9M5 27h13" stroke-width="2"/></svg><svg class="chr" viewBox="0 0 12 18"><path d="M3 2l6 7-6 7"/></svg></div>
      </div>
    </div>
    <div class="i-grp last">
      <div class="i-lab">Klassifizierung:</div>
      <div class="i-body d-flex align-items-center ps-1"><svg class="ic" style="margin-right:17px" width="26" height="28" viewBox="0 0 26 28"><path d="M3 1l7 6C4 14 4 22 14 26c8 1 10-10 6-15C17 6 13 5 10 7M10 7l6 19M5 16l16-5" stroke-width="1.8"/></svg><span>Rohbau</span></div>
    </div>
  </div>

  <div class="work-row d-flex">
    <div class="pal">
      <div class="grip"></div>
      <div class="pal-r sel d-flex align-items-center"><div class="pal-ic d-flex justify-content-center"><svg class="ic" width="30" height="40" viewBox="0 0 30 40"><path class="fg" d="M5 2 27 22H17l4 12-6 2-3-13-7 6Z"/><path d="M5 2 27 22H17l4 12-6 2-3-13-7 6Z" stroke-width="1.5"/></svg></div><span>Pfeil</span></div>
      <div class="pal-r d-flex align-items-center"><svg class="ic pal-ic" viewBox="0 0 60 40"><path d="M11 8h38v26H11Z" stroke-dasharray="5 4"/></svg><span>Markierungsrahmen</span></div>
      <div class="pal-h d-flex align-items-center" style="margin-top:3px;margin-bottom:2px"><span class="tri-d"></span>Planung</div>
      <div class="pal-r d-flex align-items-center"><svg class="ic pal-ic" viewBox="0 0 60 40"><path class="fw" d="M11 11 49 3v24L11 36Z"/></svg><span>Wand</span></div>
      <div class="pal-r d-flex align-items-center"><svg class="ic pal-ic" viewBox="0 0 60 40"><path class="fw" d="M19 6 41 1v33L19 39Z"/><path d="M26 17l6-1"/></svg><span>Tür</span></div>
      <div class="pal-r d-flex align-items-center"><svg class="ic pal-ic" viewBox="0 0 60 40"><path class="fw" d="M13 7 45 3v26L13 34Z"/><path d="M29 5v27M13 21l32-4"/></svg><span>Fenster</span></div>
      <div class="pal-r d-flex align-items-center"><svg class="ic pal-ic" viewBox="0 0 60 40"><path class="fw" d="M2 22 20 16l-6-4 20-8 26 11-30 12Z"/></svg><span>Decke</span><svg class="chr position-absolute" style="right:8px;top:20px;width:11px;height:16px" viewBox="0 0 12 18"><path d="M2 3l7 6-7 6"/></svg></div>
      <div class="pal-r d-flex align-items-center"><svg class="ic pal-ic" viewBox="0 0 60 40"><path class="fw" d="M23 6V35q7 5 14 0V6"/><ellipse class="fw" cx="30" cy="6" rx="7" ry="3"/></svg><span>Stütze</span></div>
      <div class="pal-r d-flex align-items-center"><svg class="ic pal-ic" viewBox="0 0 60 40"><path class="fw" d="M6 4 50 16v6L8 10Z"/><path d="M8 10 6 4M50 16v12h-3"/></svg><span>Träger</span></div>
      <div class="pal-r d-flex align-items-center"><svg class="ic pal-ic" viewBox="0 0 60 40"><path class="fw" d="M1 21 20 3h23l14 19-19-2-15 16Z"/><path d="M43 3 38 20"/></svg><span>Dach</span></div>
      <div class="pal-r d-flex align-items-center"><svg class="ic pal-ic" viewBox="0 0 60 40"><path class="fw" d="M3 12 18 37l15-14 15 11L54 2 26 15Z"/><path d="M26 15 18 37M54 2 33 23"/></svg><span>Schale</span></div>
      <div class="pal-r d-flex align-items-center"><svg class="ic pal-ic" viewBox="0 0 60 40"><path d="M7 9 27 3l22 11-23 8ZM5 19l23 17 22-9V17"/><path class="gr" d="M2 16 30 13"/></svg><span>Dachfenster</span></div>
      <div class="pal-r d-flex align-items-center"><svg class="ic pal-ic" viewBox="0 0 60 40"><path class="fw" d="M5 6 46 2v30L5 38Z"/><path d="M19 5v31M33 3v31M5 18l41-4M5 28l41-5"/></svg><span>Fassade</span></div>
      <div class="pal-r d-flex align-items-center"><svg class="ic pal-ic" viewBox="0 0 60 40"><path d="M2 7 24 3l7 7-17 3ZM14 13l2 6 18-3 5 7-17 4 1 5 26-7-8-6-5-1-4-8"/></svg><span>Treppe</span></div>
      <div class="pal-r d-flex align-items-center"><svg class="ic pal-ic" viewBox="0 0 60 40"><path d="M5 20 47 9M5 28 47 17M5 37V20M26 26V14M47 25V9"/></svg><span>Geländer</span></div>
      <div class="pal-r d-flex align-items-center"><svg class="ic pal-ic" viewBox="0 0 60 40"><path d="M15 38V8q0-6 6-6h3q5 0 5 6v12M15 22h34l-1 4H15M23 26v14M49 26v14"/></svg><span>Objekt</span></div>
      <div class="pal-r d-flex align-items-center" style="height:58px"><svg class="ic pal-ic" viewBox="0 0 60 40"><ellipse cx="30" cy="13" rx="14" ry="11"/><path d="M25 24v7q5 5 10 0v-7M24 13l4 3 5-5 3 4M3 13h8M49 13h8M7 2l7 4M53 2l-7 4M7 24l7-4M53 24l-7-4"/></svg><span>Lichtquelle</span></div>
      <div class="pal-r d-flex align-items-center" style="height:56px"><svg class="ic pal-ic" viewBox="0 0 60 40"><path class="gr" d="M29 8l20-3v24l-20 5"/><path class="fw" d="M11 11l18-4v27l-18 5Z"/></svg><span>Wandabschluss</span></div>
      <div class="pal-r d-flex align-items-center"><svg class="ic pal-ic" viewBox="0 0 60 40"><path class="fw" d="M11 30C11 18 24 8 31 2q6 12 3 12l11 11-19 13Z"/><path d="M31 2Q20 16 26 38"/></svg><span>Morph</span></div>
      <div class="pal-r d-flex align-items-center"><svg class="ic pal-ic" viewBox="0 0 60 40"><path d="M-3 6Q20 3 34 4q16 8 24 22L34 36Q14 18-3 6ZM10 8q16 8 24 28M23 4q10 8 24 26M4 10q18-2 36 0M14 19q18 0 30-2M22 27q16 0 28-4" stroke-width="1.7"/></svg><span>Freifläche</span></div>
      <div class="pal-r d-flex align-items-center"><svg class="ic pal-ic" viewBox="0 0 60 40"><path d="M13 6h32v26l-32 4ZM29 6v24M13 29l20-4h12"/></svg><span>Öffnung</span></div>
      <div class="pal-r d-flex align-items-center"><svg class="ic pal-ic" viewBox="0 0 60 40"><path d="M5 2h16v8h10V2h6l2 12h11v22H38v-6H20v6H5ZM15 6h16v14H15ZM22 18h18M22 22h18M22 26h18" stroke-width="2"/></svg><span>Raum</span></div>
      <div class="pal-h d-flex align-items-center" style="margin-top:3px"><span class="tri-r"></span>Sichten</div>
      <div class="pal-h d-flex align-items-center" style="margin-top:3px;height:39px"><span class="tri-d"></span>Dokumentation</div>
      <div class="off-list off" style="margin-top:3px">
        <div class="pal-r d-flex align-items-center" style="height:52px"><svg class="ic pal-ic" viewBox="0 0 60 40" style="color:#8a8f92"><path class="thin" d="M5 27h48M13 20v14M45 20v14"/><text x="22" y="18" font-size="13" font-weight="700" font-family="Liberation Sans">1.2</text></svg><span>Bemaßung</span></div>
        <div class="pal-r d-flex align-items-center"><svg class="ic pal-ic" viewBox="0 0 60 40" style="color:#8a8f92"><circle cx="28" cy="23" r="14" class="thin"/><path class="thin" d="M8 23h40M28 3v36"/><text x="38" y="12" font-size="13" font-weight="700" font-family="Liberation Sans">1.2</text></svg><span>Höhenbemaßung</span></div>
        <div class="pal-r d-flex align-items-center"><svg class="ic pal-ic" viewBox="0 0 60 40" style="color:#8a8f92"><path class="thin" d="M8 18C22 20 30 28 30 38M24 26 40 16h14"/><path class="fg" d="M22 28l9-7 2 6Z"/><text x="32" y="12" font-size="13" font-weight="700" font-family="Liberation Sans">1.2</text></svg><span>Radialbemaßung</span></div>
        <div class="pal-r d-flex align-items-center"><svg class="ic pal-ic" viewBox="0 0 60 40" style="color:#8a8f92"><path class="thin" d="M2 36 32 8M2 36h46M24 14q10 8 10 18"/><path class="fg" d="M26 26l10 8 4-6Z"/><text x="42" y="20" font-size="22" font-family="Liberation Sans">∝</text></svg><span>Winkelbemaßung</span></div>
        <div class="pal-r d-flex align-items-center"><svg class="ic pal-ic" viewBox="0 0 60 40" style="color:#8a8f92"><path class="thin" d="M6 34 26 20h5"/><path class="fg" d="M3 38V28l12 2Z"/><text x="27" y="33" font-size="32" font-weight="200" font-family="Inter">A1</text></svg><span>Etikett</span></div>
        <div class="pal-r d-flex align-items-center"><svg class="ic pal-ic" viewBox="0 0 60 40" style="color:#8a8f92"><text x="12" y="39" font-size="48" font-weight="200" font-family="Inter">A</text></svg><span>Text</span></div>
        <div class="pal-r d-flex align-items-center"><svg class="ic pal-ic" viewBox="0 0 60 40"><path d="M16 32c-8-2-8-14 4-14 0-10 20-10 22-2 10-2 12 12 2 16ZM20 22h22v14H20ZM22 34l6-10M30 34l6-10"/></svg><span>Änderung</span></div>
        <div class="pal-track"><div class="pal-thumb"></div></div>
      </div>
    </div>

    <div class="centre">
      <div class="tab-strip d-flex">
        <div class="tab-grid d-flex align-items-center justify-content-center"><svg class="ic" width="38" height="34" viewBox="0 0 38 34"><path d="M1 2h16v12H1ZM21 2h16v12H21ZM1 20h16v12H1ZM21 20h16v12H21Z" stroke-width="2.6"/></svg></div>
        <div class="tab-itm d-flex align-items-center justify-content-center" style="width:602px"><svg class="ic" width="36" height="34" viewBox="0 0 36 34"><path class="bl" d="M2 32V2h10L20 12h14v20Z" stroke-width="2.6"/></svg><span>0. EG [0. EG]</span></div>
        <div class="tab-itm act d-flex align-items-center justify-content-center"><svg class="ic" width="32" height="34" viewBox="0 0 32 34"><path d="M2 6 24 1v32L2 28ZM24 1l6 4v25l-6 3"/></svg><span>[3D / Auswahl, Geschoss 0]</span></div>
        <div class="tab-itm d-flex align-items-center justify-content-center" style="width:599px"><svg class="ic" width="26" height="34" viewBox="0 0 26 34"><path d="M1 2h24v30H1ZM1 9h24M1 17h24M1 25h24M9 2v30M17 2v30" stroke-width="2"/></svg><span>[0 Kondtional]</span></div>
        <div class="flex-grow-1"></div>
        <div class="tab-rest d-flex align-items-center justify-content-center gap-2"><svg class="ic" width="46" height="34" viewBox="0 0 46 34"><path d="M2 30V12L10 2l16 14v14ZM14 7v23M33 20v14" stroke-width="2"/><circle class="fd" cx="38" cy="24" r="3"/><circle class="fd" cx="38" cy="32" r="3"/></svg><svg class="chv" viewBox="0 0 14 14"><path d="M2 3l5 8 5-8"/></svg></div>
      </div>
      <div class="cv-wrap">
        <svg width="2603" height="1608" viewBox="425 446 2603 1608">
          <defs>
            <filter id="texCol" x="0" y="0" width="1" height="1" color-interpolation-filters="sRGB">
              <feTurbulence type="fractalNoise" baseFrequency=".045 .025" numOctaves="7" seed="11" result="n"/>
              <feColorMatrix in="n" type="matrix" values="0 0 0 0 0 0 0 0 0 0 0 0 0 0 0 .26 0 0 0 -.055" result="dk"/>
              <feColorMatrix in="n" type="matrix" values="0 0 0 0 0 0 0 0 0 0 0 0 0 0 0 .55 0 0 0 -.33" result="spk"/>
              <feMerge result="all"><feMergeNode in="dk"/><feMergeNode in="spk"/></feMerge>
              <feComposite in="all" in2="SourceAlpha" operator="in" result="dc"/>
              <feMerge><feMergeNode in="SourceGraphic"/><feMergeNode in="dc"/></feMerge>
            </filter>
            <filter id="texTop" x="0" y="0" width="1" height="1" color-interpolation-filters="sRGB">
              <feTurbulence type="fractalNoise" baseFrequency=".03 .07" numOctaves="7" seed="5" result="n"/>
              <feColorMatrix in="n" type="matrix" values="0 0 0 0 0 0 0 0 0 0 0 0 0 0 0 .22 0 0 0 -.04" result="dk"/>
              <feColorMatrix in="n" type="matrix" values="0 0 0 0 0 0 0 0 0 0 0 0 0 0 0 .5 0 0 0 -.31" result="spk"/>
              <feMerge result="all"><feMergeNode in="dk"/><feMergeNode in="spk"/></feMerge>
              <feComposite in="all" in2="SourceAlpha" operator="in" result="dc"/>
              <feMerge><feMergeNode in="SourceGraphic"/><feMergeNode in="dc"/></feMerge>
            </filter>
            <filter id="texSide" x="0" y="0" width="1" height="1" color-interpolation-filters="sRGB">
              <feTurbulence type="fractalNoise" baseFrequency=".14 .012" numOctaves="5" seed="3" result="n"/>
              <feColorMatrix in="n" type="matrix" values="0 0 0 0 0 0 0 0 0 0 0 0 0 0 0 .28 0 0 0 -.06" result="dk"/>
              <feComposite in="dk" in2="SourceAlpha" operator="in" result="dc"/>
              <feMerge><feMergeNode in="SourceGraphic"/><feMergeNode in="dc"/></feMerge>
            </filter>
          </defs>
          <!-- lower column -->
          <g filter="url(#texCol)"><path d="M1434 1600 1590 1600 1599 2054H1451Z" fill="#797c7b"/><path d="M1590 1500 1836 1500 1828 2054H1599Z" fill="#7e807f"/></g>
          <path d="M1434 1600 1451 2054M1590 1600 1599 2054M1836 1500 1828 2054" stroke="#000" stroke-width="2" fill="none"/>
          <!-- yellow band -->
          <path d="M836 1246 1348 1604V1694L840 1291Z" fill="#d8ee47"/>
          <path d="M1348 1604 2508 1285 2502 1336 1352 1694Z" fill="#daf343"/>
          <!-- slab -->
          <g filter="url(#texSide)"><path d="M832 1207 1344 1531 1348 1604 836 1246Z" fill="#6f8374"/></g>
          <g filter="url(#texSide)"><path d="M1344 1531 2511 1243 2508 1285 1348 1604Z" fill="#728677"/></g>
          <g filter="url(#texTop)"><path d="M832 1207 1721 1119 2511 1243 1344 1531Z" fill="#799682"/></g>
          <path d="M836 1246 1348 1604 2508 1285" fill="none" stroke="#23b832" stroke-width="4"/>
          <path d="M840 1291 1352 1694 2502 1336" fill="none" stroke="#23b832" stroke-width="3"/>
          <path d="M832 1207 840 1291M1344 1531 1352 1694M2511 1243 2502 1336" fill="none" stroke="#1fb62c" stroke-width="2.5"/>
          <path d="M832 1207 1721 1119 2511 1243" fill="none" stroke="#0000f0" stroke-width="6"/>
          <!-- upper column -->
          <g filter="url(#texCol)"><path d="M1392 446H1572L1585 1270 1420 1219Z" fill="#797c7b"/><path d="M1572 446H1850L1837 1230 1585 1270Z" fill="#7e807f"/></g>
          <path d="M1392 446 1420 1219M1572 446 1585 1270M1850 446 1837 1230" stroke="#000" stroke-width="2" fill="none"/>
          <!-- see-through edges -->
          <path d="M1419 1166 1721 1119 1850 1139" fill="none" stroke="#3a4bd0" stroke-width="6" opacity=".55"/>
          <g fill="none" stroke="#21c030" stroke-width="2" opacity=".45">
            <path d="M895 1237 1721 1146 2513 1285M836 1291 1721 1179 2502 1336M1721 1119V1179M1658 1188V1224"/>
            <path d="M1420 1219V1307L1587 1369 1837 1320V1230M1585 1270 1587 1369M1423 1258 1587 1313 1837 1269M1423 1258 1658 1224 1837 1269M1587 1313 1733 1291"/>
            <path d="M1465 1340V1443L1508 1479 1578 1461V1343M1508 1357V1479M1533 1328V1430M1465 1394 1508 1409 1578 1396 1533 1378ZM1469 1456 1508 1476 1578 1461 1515 1443Z"/>
          </g>
          <path d="M1420 1219 1585 1270 1837 1230" fill="none" stroke="#1fce32" stroke-width="5"/>
          <path d="M1465 1340 1533 1328 1574 1343 1508 1357Z" fill="#9fb0a4" stroke="#1fce32" stroke-width="4.5"/>
          <path d="M1533 1330V1352" stroke="#222" stroke-width="1.5"/>
          <path d="M832 1207 1344 1531 2511 1243" fill="none" stroke="#0000f0" stroke-width="6"/>
          <g fill="#000"><circle cx="832" cy="1207" r="6"/><circle cx="2511" cy="1243" r="6"/><circle cx="1344" cy="1531" r="6"/><circle cx="840" cy="1291" r="6"/><circle cx="2502" cy="1336" r="6"/><circle cx="1352" cy="1694" r="6"/></g>
          <circle cx="1721" cy="1119" r="6" fill="#345" opacity=".6"/><circle cx="1721" cy="1179" r="6" fill="#242" opacity=".4"/>
        </svg>
        <div class="h-grab h-l"><span class="dash-v"></span></div>
        <div class="h-grab h-r"><span class="dash-v"></span></div>
        <div class="h-grab h-t"><span class="dash-h"></span></div>
        <div class="h-grab h-b"><span class="dash-h"></span></div>
      </div>
      <div class="stat-strip d-flex">
        <div class="st-g w144 d-flex align-items-center" style="padding:0 0 0 8px"><svg class="ic" viewBox="0 0 32 32" style="margin-right:12px"><circle class="gr" cx="17" cy="13" r="11"/><path class="gr" d="M1 13h14M6 9l-4 4 4 4M10 24l-5 7M24 24l4 7"/></svg><svg class="ic" viewBox="0 0 32 32" style="margin-right:10px"><circle class="gr" cx="15" cy="13" r="11"/><path class="gr" d="M16 13h15M27 9l4 4-4 4M22 23l6 8"/></svg><svg class="ic" viewBox="0 0 32 32" style="margin:0"><circle cx="15" cy="13" r="11"/><path d="M15 8v10M10 13h10M22 23l7 9"/></svg></div>
        <div class="st-g w102 d-flex align-items-center" style="padding:0 0 0 10px"><svg class="ic" viewBox="0 0 32 32" style="margin-right:12px"><path d="M8 20C1 12 8 3 16 3s14 9 8 17c-2 3-5 4-8 4M21 15l-7 9 9 4" stroke-width="2.2"/></svg><svg class="ic" viewBox="0 0 32 32" style="margin:0"><circle class="fd" cx="16" cy="5" r="2.5"/><path d="M16 10v9M16 10l-8 8M16 10l8 8M16 19l-6 12M16 19l6 12"/></svg></div>
        <div class="st-g w216 d-flex align-items-center off" style="padding-left:10px"><svg class="ic" viewBox="0 0 32 32" style="stroke:#28353c"><ellipse cx="13" cy="13" rx="11" ry="12"/><path d="M8 13h0M18 13h0M13 7v0M13 19v0M20 23l9 9" stroke-width="3" stroke-linecap="round"/></svg><span class="st-t dimt" style="padding-left:16px">keine Daten</span><svg class="chr dim" viewBox="0 0 12 18"><path d="M3 2l6 7-6 7"/></svg></div>
        <div class="st-g w216 d-flex align-items-center off"><svg class="ic" viewBox="0 0 32 32"><path d="M12 2 22 12 12 26 2 14Z"/><path d="M20 30V14M15 19l5-5 5 5"/></svg><span class="st-t dimt">keine Daten</span><svg class="chr dim" viewBox="0 0 12 18"><path d="M3 2l6 7-6 7"/></svg></div>
        <div class="st-g d-flex align-items-center" style="width:217px"><svg class="ic" viewBox="0 0 32 32"><path d="M2 6h28v20H2Z" stroke-width="2.6"/><path d="M6 18v8M12 21v5M18 18v8M24 21v5"/></svg><span class="st-t text-center" style="padding:0">1:100</span><svg class="chr" viewBox="0 0 12 18"><path d="M3 2l6 7-6 7"/></svg></div>
        <div class="st-g w216 d-flex align-items-center"><svg class="ic" viewBox="0 0 32 32"><path d="M8 2h22l-6 10H2ZM4 13 2 20h22l6-10M4 21l-2 8h22l6-10" stroke-width="2.4"/></svg><span class="st-t">00 Arbeits…</span><svg class="chr" viewBox="0 0 12 18"><path d="M3 2l6 7-6 7"/></svg></div>
        <div class="st-g w216 d-flex align-items-center"><svg class="ic" viewBox="0 0 32 32"><path d="M3 2h26v28H3Z" stroke-width="2.6"/><path d="M5 22 16 8M12 22 23 8M19 22l9-11M4 8h24M4 24h24"/></svg><span class="st-t">Komplette…</span><svg class="chr" viewBox="0 0 12 18"><path d="M3 2l6 7-6 7"/></svg></div>
        <div class="st-g w216 d-flex align-items-center"><svg class="ic" viewBox="0 0 32 32"><path d="M10 2v20l6 9 6-9V2M10 22h12"/></svg><span class="st-t">04 S/W 1:…</span><svg class="chr" viewBox="0 0 12 18"><path d="M3 2l6 7-6 7"/></svg></div>
        <div class="st-g w214 d-flex align-items-center"><svg class="ic" viewBox="0 0 32 32"><path d="M2 2h28v28H2Z" stroke-width="2.6"/><path class="fd" d="M2 2h28v4H2ZM2 26h28v4H2Z"/><path d="M10 10h12v10H10Z"/></svg><span class="st-t">00 Arbeit…</span><svg class="chr" viewBox="0 0 12 18"><path d="M3 2l6 7-6 7"/></svg></div>
        <div class="st-g w214 d-flex align-items-center"><svg class="ic" viewBox="0 0 32 32"><path d="M14 10H4v18h6M18 6c4-6 8-2 8 2v5M23 10l3 3 3-3"/><path class="fg" d="M14 12h12v18H14Z"/></svg><span class="st-t">Keine Übe…</span><svg class="chr" viewBox="0 0 12 18"><path d="M3 2l6 7-6 7"/></svg></div>
        <div class="st-g w214 d-flex align-items-center"><svg class="ic" viewBox="0 0 32 32"><path class="gr" d="M18 2 4 26v5h14"/><path d="M18 2l9 16v13H14V24M18 24h5v7"/></svg><span class="st-t">00 Reiner…</span><svg class="chr" viewBox="0 0 12 18"><path d="M3 2l6 7-6 7"/></svg></div>
        <div class="st-g w214 d-flex align-items-center"><svg class="ic" viewBox="0 0 32 32"><path d="M2 14 10 2M5 18 15 6M8 31V18l8-8 14 10v11ZM15 31V22h5v9M24 24h4v5h-4"/></svg><span class="st-t">Nur Haupt…</span><svg class="chr" viewBox="0 0 12 18"><path d="M3 2l6 7-6 7"/></svg></div>
        <div class="st-g w205 d-flex align-items-center" style="padding-right:4px"><svg class="ic" viewBox="0 0 32 32"><path d="M6 30V10L12 2h14v20l-6 8ZM6 10h14v20M20 10l6-8" stroke-width="2.4"/></svg><span class="st-t">Schattieru…</span><svg class="chr" viewBox="0 0 12 18"><path d="M3 2l6 7-6 7"/></svg></div>
      </div>
    </div>

    <div class="side">
      <div class="side-grip"></div>
      <div class="side-top d-flex align-items-center">
        <div class="s-sel d-flex align-items-center justify-content-center"><svg class="ic" width="38" height="28" viewBox="0 0 38 28"><path d="M1 26V14L14 3h6l17 9v14ZM16 4 14 26M14 14h23" stroke-width="2"/></svg></div>
        <svg class="ic s-ic" width="38" height="30" viewBox="0 0 38 30"><path d="M1 2h36v26H1ZM6 24V16L16 7h5l11 7v10ZM16 8 14 24M14 16h17" stroke-width="2"/></svg>
        <svg class="ic s-ic" width="38" height="30" viewBox="0 0 38 30"><path d="M1 28V12L14 2v26ZM14 28h23V14H14M26 24h11M26 22v6" stroke-width="2"/></svg>
        <svg class="ic s-ic" width="34" height="30" viewBox="0 0 34 30"><path d="M1 2h24v18H1ZM1 8h24M5 24h24V6h2M9 28h24V10" stroke-width="2"/></svg>
        <div class="s-menu d-flex align-items-center justify-content-center"><svg class="ic" width="24" height="14" viewBox="0 0 24 14"><path d="M0 1h24M0 7h24M0 13h24" stroke-width="1.8"/></svg><svg class="chr" style="width:9px;height:12px" viewBox="0 0 12 18"><path d="M2 2l8 7-8 7"/></svg></div>
      </div>
      <div class="s-find d-flex align-items-center"><svg class="ic" width="26" height="24" viewBox="0 0 26 24"><ellipse cx="11" cy="10" rx="10" ry="8"/><path d="M18 16l7 6" stroke-width="2.6"/></svg><span>Projektmappe durchsuchen</span></div>
      <div class="d-flex">
        <div>
          <div class="t-list">
            <div class="t-r lv1 d-flex align-items-center"><span class="t-cw"></span><svg class="ic t-i" viewBox="0 0 36 28"><path d="M1 27V3h17l5 10h12v14ZM7 3v8l4-3" stroke-width="2"/></svg><span>0. EG</span></div>
            <div class="t-r lv1 d-flex align-items-center"><span class="t-cw"></span><svg class="ic t-i" viewBox="0 0 36 28"><path d="M1 27V3h17l5 10h12v14ZM7 3v8l4-3" stroke-width="2"/></svg><span>-1. UG</span></div>
            <div class="t-r lv0 d-flex align-items-center"><span class="t-cw"></span><svg class="ic t-i" viewBox="0 0 36 28"><path d="M1 13 18 5l17 8M4 13h28v13H4Z" stroke-width="2"/></svg><span>Schnitte</span></div>
            <div class="t-r lv0 d-flex align-items-center"><span class="t-cw"></span><svg class="ic t-i" viewBox="0 0 36 28"><path d="M1 13 18 5l17 8M4 13v13h28V13" stroke-width="2"/></svg><span>Ansichten</span></div>
            <div class="t-r lv0 d-flex align-items-center"><span class="t-cw"></span><svg class="ic t-i" viewBox="0 0 36 28"><path d="M1 4h34v22H1ZM7 26V9h8v17M21 9h8v6h-8Z" stroke-width="2"/></svg><span>Innenansichten</span></div>
            <div class="t-r lv0 d-flex align-items-center"><span class="t-cw"></span><svg class="ic t-i" viewBox="0 0 36 28"><path d="M1 4h25l9 9v13H1ZM5 23h26M6 21l12-10 3 2-12 9Z" stroke-width="2"/></svg><span>Arbeitsblätter</span></div>
            <div class="t-r lv0 d-flex align-items-center"><span class="t-cw"></span><svg class="ic t-i" viewBox="0 0 36 28"><ellipse cx="18" cy="14" rx="17" ry="13"/><path d="M8 3v22M14 9h8V1M14 9v10h8v8M22 9v10M22 14h13" stroke-width="2"/></svg><span>Details</span></div>
            <div class="t-r lv0 d-flex align-items-center"><span class="t-cw"></span><svg class="ic t-i" viewBox="0 0 36 28"><path d="M1 4h25l9 9v13H1ZM7 11h13v12H7ZM7 11l4-4h13v10l-4 6M20 11l4-4" stroke-width="2"/></svg><span>3D-Dokumente</span></div>
            <div class="t-r lv0 d-flex align-items-center"><span class="t-cw"><svg class="ic" width="18" height="10" viewBox="0 0 18 10" style="stroke:#8a8f92"><path d="M1 2l8 6 8-6"/></svg></span><svg class="ic t-i" viewBox="0 0 36 28"><path d="M3 6 26 2v24L3 22ZM26 2l7 3v19l-7 2" stroke-width="2"/></svg><span>3D</span></div>
            <div class="t-r sel lv1 d-flex align-items-center"><span class="t-cw"></span><svg class="ic t-i" viewBox="0 0 36 28"><path d="M3 6 26 2v24L3 22ZM26 2l7 3v19l-7 2" stroke-width="2"/></svg><span>Allgemeine Perspektive</span></div>
            <div class="t-r lv1 d-flex align-items-center"><span class="t-cw"></span><svg class="ic t-i" viewBox="0 0 36 28"><path d="M3 9v15l20 3V11ZM3 9l12-7 18 4-10 5M33 6v15l-10 6" stroke-width="2"/></svg><span>Allgemeine Axonometrie</span></div>
            <div class="t-r lv1 d-flex align-items-center"><span class="t-cw"></span><svg class="ic t-i" viewBox="0 0 36 28"><path d="M6 9h20v13H6ZM26 15l9-6v13ZM14 5q6-4 12 0M12 26q-5 2-9 2" stroke-width="2"/></svg><span>00 Neue Animationsroute</span></div>
            <div class="t-r lv0 d-flex align-items-center"><span class="t-cw"><svg class="ic" width="18" height="10" viewBox="0 0 18 10" style="stroke:#8a8f92"><path d="M1 2l8 6 8-6"/></svg></span><svg class="ic t-i" viewBox="0 0 36 28"><path d="M6 2h25v25H6ZM6 10h25M6 18h25M14 2v25M23 2v25" stroke-width="2"/></svg><span>Auswertungen</span></div>
            <div class="t-r lv1 d-flex align-items-center"><span class="t-cw"><svg class="ic" width="10" height="16" viewBox="0 0 10 16" style="stroke:#8a8f92"><path d="M2 1l6 7-6 7"/></svg></span><svg class="ic t-i" viewBox="0 0 36 28"><path d="M1 7h34v14H1ZM5 21 13 7M12 21l8-14M19 21l8-14M26 21l8-14" stroke-width="2"/></svg><span>Elemente</span></div>
            <div class="t-r lv1 d-flex align-items-center"><span class="t-cw"><svg class="ic" width="18" height="10" viewBox="0 0 18 10" style="stroke:#8a8f92"><path d="M1 2l8 6 8-6"/></svg></span><svg class="ic t-i" viewBox="0 0 36 28"><path d="M1 25h34v-6H1ZM6 19v-6h24v6M13 13V7h12v6M18 19v6M13 13v6M24 13v6" stroke-width="2"/></svg><span>Komponenten</span></div>
            <div class="t-r lv2 d-flex align-items-center"><span class="t-cw"></span><svg class="ic t-i" viewBox="0 0 36 28"><path d="M6 2h25v25H6ZM6 10h25M6 18h25M14 2v25M23 2v25" stroke-width="2"/></svg><span>0 Kondtional</span></div>
            <div class="t-r lv2 d-flex align-items-center"><span class="t-cw"></span><svg class="ic t-i" viewBox="0 0 36 28"><path d="M6 2h25v25H6ZM6 10h25M6 18h25M14 2v25M23 2v25" stroke-width="2"/></svg><span>10-01 Rohbau - Bauteile</span></div>
            <div class="t-r lv2 d-flex align-items-center"><span class="t-cw"></span><svg class="ic t-i" viewBox="0 0 36 28"><path d="M6 2h25v25H6ZM6 10h25M6 18h25M14 2v25M23 2v25" stroke-width="2"/></svg><span>10-02 Ausbau - Fußbodenaufbau</span></div>
          </div>
          <div class="t-hbar"><div class="t-hthumb"></div></div>
        </div>
        <div class="t-track"><div class="t-thumb"></div></div>
      </div>
      <div class="s-acts d-flex align-items-center">
        <svg class="ic" width="28" height="26" viewBox="0 0 28 26"><ellipse class="lb" cx="14" cy="13" rx="13" ry="11.5"/><path class="lb" d="M14 6v14M7 13h14"/></svg>
        <svg class="ic" width="30" height="24" viewBox="0 0 30 24"><path class="bl" d="M1 2h28v20H1ZM6 8h3M12 8h12M6 12h3M12 12h12M6 16h3M12 16h12" stroke-width="2"/></svg>
        <svg class="ic" width="28" height="26" viewBox="0 0 28 26"><path d="M2 2l24 22M26 2 2 24" style="stroke:#f58d82" stroke-width="3"/></svg>
      </div>
      <div class="s-h d-flex align-items-center"><span class="tri-d"></span>Beschreibungen</div>
      <div class="s-pers d-flex align-items-center"><svg class="ic" width="24" height="22" viewBox="0 0 24 22"><path d="M1 3 17 1v20L1 17ZM17 1l6 2v14l-6 4" stroke-width="2"/></svg><span>Allgemeine Perspektive</span></div>
      <div class="s-btn">Einstellungen…</div>
      <div class="s-sep"></div>
      <div class="d-flex" style="margin-left:10px;gap:4px">
        <div class="o-btn d-flex align-items-center justify-content-center" style="width:56px"><svg class="ic" width="36" height="34" viewBox="0 0 36 34"><path class="lb" d="M33 9v24H8"/><path class="gr" d="M1 2h29v26H1ZM6 7h20v16" stroke-width="2.4"/></svg></div>
        <div class="o-btn d-flex align-items-center" style="width:464px;padding-left:7px;color:#bdbdbd"><svg class="ic me-2" width="36" height="30" viewBox="0 0 36 30" style="stroke:#8a8f92"><path d="M1 29V2h17l5 12h12v15ZM7 2v8l4-3" stroke-width="2.4"/></svg><span class="flex-grow-1">0. EG</span><svg class="chr dim me-2" style="width:10px;height:14px" viewBox="0 0 12 18"><path d="M2 2l8 7-8 7"/></svg></div>
      </div>
      <div class="d-flex align-items-center" style="height:79px;padding-left:10px">
        <svg class="ic" width="36" height="36" viewBox="0 0 36 36"><path class="gr" d="M1 2h26v20H1ZM7 7l18 16M7 7h7M7 7v6M25 23h-7M25 23v-6"/><path class="lb" d="M10 34h25V14h-7"/></svg>
        <svg class="ic" style="margin-left:83px" width="36" height="36" viewBox="0 0 36 36"><path class="lb" d="M14 22H1V2h24v12"/><path class="gr" d="M24 14v22M12 25h24M20 18l4-4 4 4M20 32l4 4 4-4M16 21l-4 4 4 4M32 21l4 4-4 4"/></svg>
        <svg class="ic" style="margin-left:23px" width="36" height="36" viewBox="0 0 36 36"><path class="lb" d="M2 10 22 2l8 16M2 10l12 18h6"/><path class="gr" d="M34 16c0 8-6 12-14 12M30 12l5 5M30 12l-4 5M20 28l5-4M20 28l5 4"/></svg>
        <svg class="ic" style="margin-left:24px" width="36" height="36" viewBox="0 0 36 36"><path class="lb" d="M2 2h26v16H2ZM10 18v14h24V14h-6"/><path class="gr" d="M28 26C28 18 24 14 14 12M14 12l4-3M14 12l4 4"/></svg>
        <svg class="ic" style="margin-left:24px" width="36" height="36" viewBox="0 0 36 36"><ellipse class="gr" cx="18" cy="18" rx="16" ry="15"/><path class="gr" d="M7 16C9 8 20 7 26 12M26 12V6M26 12l-6 1M29 20C27 28 16 29 10 24M10 24v6M10 24l6-1"/></svg>
      </div>
      <div class="o-line"></div>
      <div class="s-note" style="margin-top:13px">Transparentpause:</div>
      <div class="d-flex s-rowline">
        <div class="o-btn d-flex align-items-center justify-content-center gap-2" style="width:56px"><svg class="ic" width="24" height="24" viewBox="0 0 24 24"><rect width="24" height="24" fill="#fb9189" stroke="none"/></svg><svg class="chr dim" style="width:10px;height:14px" viewBox="0 0 12 18"><path d="M2 2l8 7-8 7"/></svg></div>
        <div class="sld d-flex justify-content-between align-items-center"><span></span><span></span><span></span><span></span><span></span><span></span><span></span><span></span><span></span><span></span></div>
        <div class="o-btn d-flex align-items-center justify-content-center" style="width:26px"><svg class="chr dim" style="width:10px;height:14px" viewBox="0 0 12 18"><path d="M2 2l8 7-8 7"/></svg></div>
      </div>
      <div class="s-note" style="margin-top:13px">Aktiv:</div>
      <div class="d-flex s-rowline">
        <div class="o-btn d-flex align-items-center justify-content-center gap-2" style="width:56px"><svg class="ic" width="26" height="26" viewBox="0 0 26 26"><path d="M13 13V2a11 11 0 0 0-11 15Z" fill="#8cc79a" stroke="none"/><path d="M13 13V2a11 11 0 0 1 11 15Z" fill="#fb9189" stroke="none"/><path d="M13 13 2 17a11 11 0 0 0 22 0Z" fill="#8fb9f2" stroke="none"/><circle class="gr" cx="13" cy="13" r="11.5"/></svg><svg class="chr dim" style="width:10px;height:14px" viewBox="0 0 12 18"><path d="M2 2l8 7-8 7"/></svg></div>
        <div class="sld d-flex justify-content-between align-items-center"><span></span><span></span><span></span><span></span><span></span><span></span><span></span><span></span><span></span><span></span></div>
      </div>
      <div class="o-line" style="margin-top:15px"></div>
      <div class="d-flex align-items-center" style="height:74px;padding-left:80px;gap:24px">
        <svg class="ic" width="36" height="38" viewBox="0 0 36 38"><path class="lb" d="M14 24H1V2h24v9"/><path class="gr" d="M10 30l8 7h12l4-14-6-3-1-7-4 6-2-8-2 9-4-4v8ZM24 10v10M30 14v10"/></svg>
        <svg class="ic" width="36" height="38" viewBox="0 0 36 38"><path class="gr" d="M1 24V6h26v12"/><path class="lb" d="M10 16h24v18H10Z"/><path class="gr" d="M20 26h7v-6"/></svg>
        <svg class="ic" width="36" height="38" viewBox="0 0 36 38"><path class="gr" d="M17 8H2v22h15M10 15l-5 4 5 4"/><path class="lb" d="M17 8h17v22H17M25 15l5 4-5 4"/><path class="gr" d="M17 2v34"/></svg>
        <svg class="ic" width="36" height="38" viewBox="0 0 36 38"><path class="gr" d="M1 2h28v22H1ZM3 20l16-16M10 24 26 8M10 28q12-8 24 0-12 8-24 0ZM12 34l20-12"/></svg>
      </div>
    </div>
  </div>

  <div class="foot-strip d-flex align-items-center justify-content-end">
    <svg class="ic" width="32" height="24" viewBox="0 0 32 24"><path d="M1 16V2h25v4M6 7h25v16H6Z" stroke-width="2.4"/></svg>
    <div class="gs-logo">GRAPHISOFT<span>ID</span></div>
  </div>
</div>
</body>
</html>
